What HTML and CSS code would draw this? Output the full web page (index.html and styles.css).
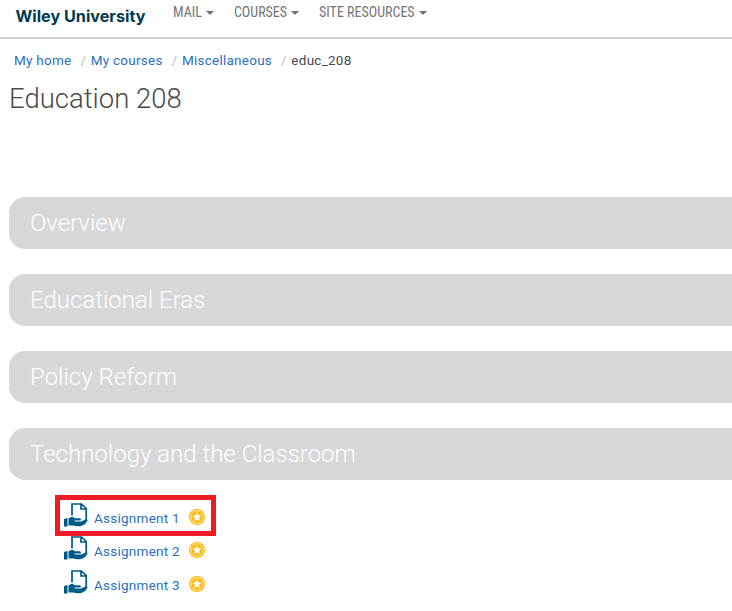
FILE: index.html
```html
<!DOCTYPE html>
<html lang="en">
<head>
<meta charset="utf-8">
<title>Education 208</title>
<link rel="stylesheet" href="styles.css">
</head>
<body>
<svg class="defs" width="0" height="0" aria-hidden="true">
<symbol id="assign" viewBox="0 0 24 25">
<path fill="none" stroke="#005a87" stroke-width="1.700" d="M8 13.500V2H17.500L22.200 6.500V18M17 2V7H22"/>
<path fill="#005a87" d="M0 17L3.500 16V24.500H0zM4.500 16.500C6.500 14.500 9 14.300 11 16.300H15.500Q17.300 16.400 17 17.700Q16.700 18.600 15 18.600H10.500V19.500H17L21.500 17.500Q24 17 23.500 18.700Q21.500 22.500 18 23.800Q13 25 9 23.600L4.500 23.500z"/>
</symbol>
<symbol id="badge" viewBox="0 0 16 16">
<circle cx="8" cy="8" r="8" fill="#fdb913"/><circle cx="8" cy="8" r="6.300" fill="none" stroke="#fff" stroke-width=".7"/>
<path fill="#fff" d="M8 3.500l1.300 2.800 3.100.4-2.300 2.100.6 3.100L8 10.400l-2.700 1.500.6-3.100-2.300-2.100 3.100-.4z"/>
</symbol>
</svg>
<header class="topbar">
<a class="brand">Wiley University</a>
<nav class="menu"><a>MAIL</a><a>COURSES</a><a>SITE RESOURCES</a></nav>
</header>
<nav class="crumbs"><a>My home</a><i>/</i><a>My courses</a><i>/</i><a>Miscellaneous</a><i>/</i><span>educ_208</span></nav>
<h1>Education 208</h1>
<main class="sections">
<h2>Overview</h2>
<h2>Educational Eras</h2>
<h2>Policy Reform</h2>
<h2>Technology and the Classroom</h2>
</main>
<ul class="tasks">
<li class="marked"><svg class="assign"><use href="#assign"/></svg><a>Assignment 1</a><svg class="badge"><use href="#badge"/></svg></li>
<li><svg class="assign"><use href="#assign"/></svg><a>Assignment 2</a><svg class="badge"><use href="#badge"/></svg></li>
<li><svg class="assign"><use href="#assign"/></svg><a>Assignment 3</a><svg class="badge"><use href="#badge"/></svg></li>
</ul>
</body>
</html>
```
FILE: styles.css
```css
* { box-sizing: border-box; }
body { margin: 0; background: #fff; font-family: Roboto, sans-serif; color: #4a4a4a; overflow: hidden; }
.defs { position: absolute; }
.topbar { display: flex; height: 39px; border-bottom: 2px solid #d0d0d0; padding-left: 15.500px; }
.brand { width: 157.500px; font: 700 16.2px/32px Inter, sans-serif; color: #003b4c; white-space: nowrap; }
.menu { display: flex; gap: 20px; font: 400 14px/25px "Roboto Condensed", Roboto, sans-serif; font-stretch: 75%; color: #757575; }
.menu a { display: flex; align-items: center; height: 25px; white-space: nowrap; }
.menu a::after { content: ""; margin: 1px 0 0 4px; border: 4px solid transparent; border-top-color: #707070; border-bottom: 0; }
.crumbs { display: flex; height: 42px; padding-left: 14px; font-size: 13.500px; letter-spacing: .25px; line-height: 43px; }
.crumbs a, .tasks a { color: #2b70bd; }
.crumbs i { width: 19.300px; padding-left: 9px; font-style: normal; color: #bbb; }
h1 { margin: 0 0 0 9px; height: 116px; font-weight: 300; font-size: 27.500px; line-height: 35px; }
.sections { display: grid; gap: 25px; padding-left: 9px; }
h2 { margin: 0; height: 52px; padding-left: 21px; border-radius: 16px 0 0 16px; background: #d6d7d9; color: #fff; font-weight: 300; font-size: 24px; line-height: 52px; }
.tasks { list-style: none; margin: 15px 0 0 55px; padding: 0; }
.tasks li { display: flex; align-items: flex-start; width: 161px; height: 34px; padding-left: 9px; font-size: 13.500px; letter-spacing: .25px; line-height: 16px; }
.tasks .marked { height: 41px; padding: 2px 0 0 4px; border: 5px solid #ed1c24; }
.tasks .marked + li { margin-top: -1px; }
.tasks a { margin-top: 8px; width: 86px; white-space: nowrap; }
.assign { width: 24px; height: 25px; margin-right: 6px; }
.badge { width: 16px; height: 16px; margin: 7px 0 0 9px; }
```
